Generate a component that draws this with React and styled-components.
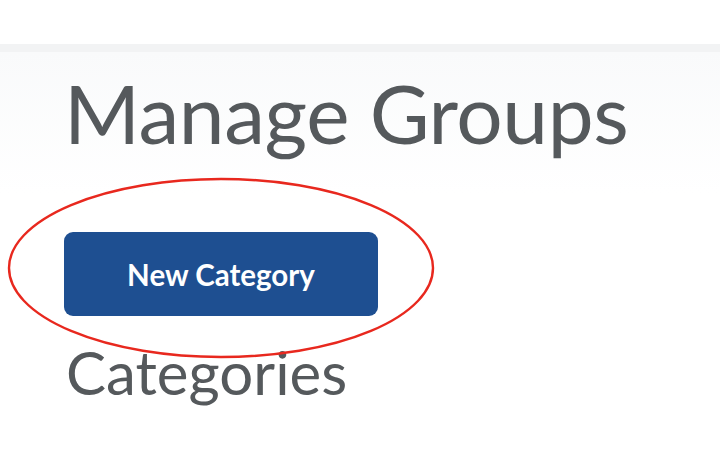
import React from "react";
import styled, { createGlobalStyle } from "styled-components";

const GlobalStyle = createGlobalStyle`
  html, body {
    margin: 0;
    padding: 0;
    background: #ffffff;
  }
  body {
    font-family: "Lato", "Liberation Sans", sans-serif;
    color: #55595c;
  }
`;

const Page = styled.div`
  position: relative;
  width: 720px;
  height: 470px;
  overflow: hidden;
  background: #ffffff;
`;

const TopNav = styled.nav`
  height: 44px;
  overflow: hidden;
  display: flex;
  gap: 28px;
  padding-left: 56px;
  background: #ffffff;
`;

const NavItem = styled.span`
  margin-top: -14px;
  font-size: 14px;
  line-height: 14px;
  color: #b4b8bb;
  white-space: nowrap;
`;

const Band = styled.div`
  height: 8px;
  background: #f2f3f4;
`;

const Main = styled.main`
  padding: 10px 0 0 66px;
  background: linear-gradient(to bottom, #f9fafb 0px, #ffffff 141px, #ffffff 100%);
  min-height: 420px;
`;

const Title = styled.h1`
  margin: 0 0 0 -2px;
  font-size: 82px;
  font-weight: 400;
  letter-spacing: -0.4px;
  line-height: 100px;
  color: #55595c;
`;

const PrimaryButton = styled.button`
  display: flex;
  align-items: center;
  justify-content: center;
  width: 314px;
  height: 84px;
  margin: 70px 0 0 -2px;
  border: none;
  border-radius: 9px;
  background: #1e4f91;
  color: #ffffff;
  font-family: "Lato", "Liberation Sans", sans-serif;
  font-size: 29.5px;
  font-weight: 700;
  cursor: pointer;
`;

const SectionTitle = styled.h2`
  margin: 21px 0 0;
  font-size: 60px;
  font-weight: 400;
  line-height: 70px;
  color: #55595c;
`;

const Annotation = styled.svg`
  position: absolute;
  left: 6px;
  top: 177px;
  pointer-events: none;
`;

const navItems = [
  "Course Home",
  "Content",
  "Discussions",
  "Assignments",
  "Quizzes",
  "Grades",
  "Classlist",
  "Groups",
];

export default function App() {
  return (
    <Page>
      <GlobalStyle />
      <TopNav>
        {navItems.map((item) => (
          <NavItem key={item}>{item}</NavItem>
        ))}
      </TopNav>
      <Band />
      <Main>
        <Title>Manage Groups</Title>
        <PrimaryButton>New Category</PrimaryButton>
        <SectionTitle>Categories</SectionTitle>
      </Main>
      <Annotation width="430" height="183" viewBox="0 0 430 183">
        <ellipse
          cx="215"
          cy="91"
          rx="212"
          ry="89"
          fill="none"
          stroke="#e8281e"
          strokeWidth="2.4"
        />
      </Annotation>
    </Page>
  );
}
